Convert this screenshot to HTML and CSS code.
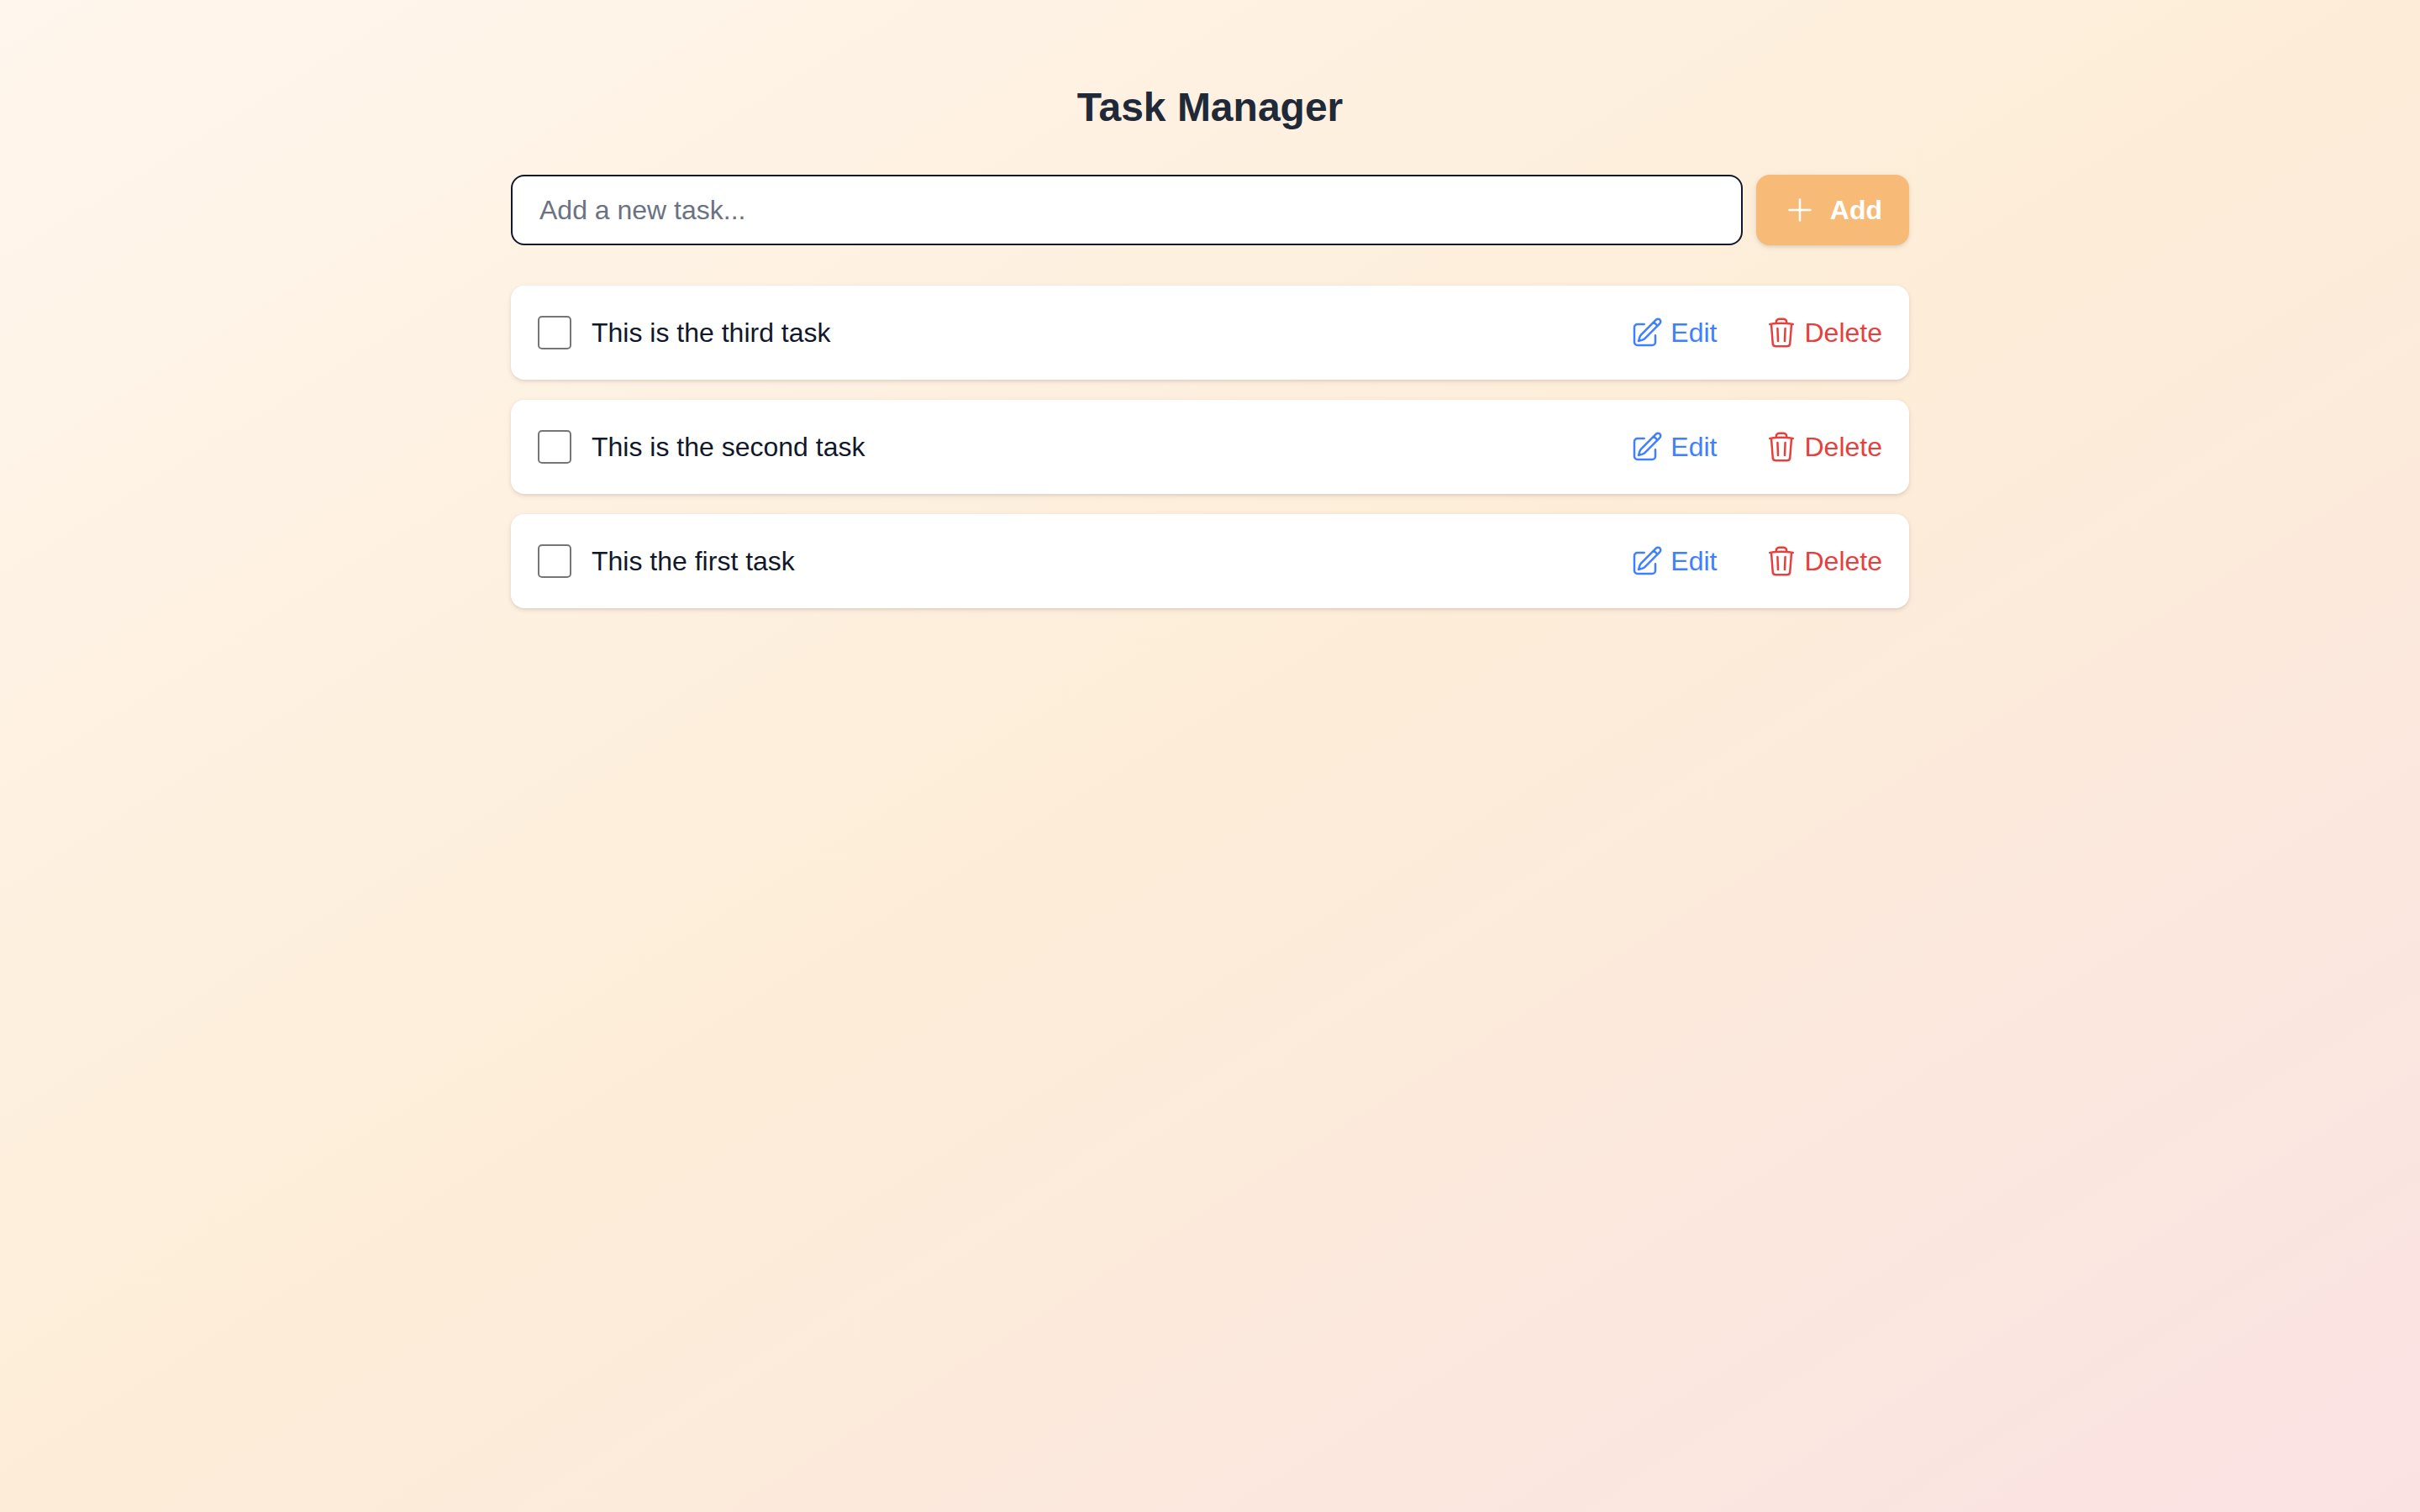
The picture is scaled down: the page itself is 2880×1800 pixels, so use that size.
FILE: index.html
```html
<!DOCTYPE html>
<html lang="en">
<head>
<meta charset="utf-8">
<meta name="viewport" content="width=device-width, initial-scale=1">
<title>Task Manager</title>
<link rel="stylesheet" href="styles.css">
</head>
<body>
<svg class="sprite" aria-hidden="true">
  <symbol id="plus" viewBox="0 0 24 24"><path d="M12 4.5v15m7.5-7.5h-15"/></symbol>
  <symbol id="edit" viewBox="0 0 24 24"><path d="m16.862 4.487 1.687-1.688a1.875 1.875 0 1 1 2.652 2.652L10.582 16.07a4.5 4.5 0 0 1-1.897 1.13L6 18l.8-2.685a4.5 4.5 0 0 1 1.13-1.897l8.932-8.931Zm0 0L19.5 7.125M18 14v4.75A2.25 2.25 0 0 1 15.75 21H5.25A2.25 2.25 0 0 1 3 18.75V8.25A2.25 2.25 0 0 1 5.25 6H10"/></symbol>
  <symbol id="trash" viewBox="0 0 24 24"><path d="m14.74 9-.346 9m-4.788 0L9.26 9m9.968-3.21c.342.052.682.107 1.022.166m-1.022-.165L18.16 19.673a2.25 2.25 0 0 1-2.244 2.077H8.084a2.25 2.25 0 0 1-2.244-2.077L4.772 5.79m14.456 0a48.108 48.108 0 0 0-3.478-.397m-12 .562c.34-.059.68-.114 1.022-.165m0 0a48.11 48.11 0 0 1 3.478-.397m7.5 0v-.916c0-1.18-.91-2.164-2.09-2.201a51.964 51.964 0 0 0-3.32 0c-1.18.037-2.09 1.022-2.09 2.201v.916m7.5 0a48.667 48.667 0 0 0-7.5 0"/></symbol>
</svg>
<main class="page">
  <h1 class="title">Task Manager</h1>
  <form class="add-form">
    <input class="add-input" type="text" placeholder="Add a new task..." aria-label="New task">
    <button class="add-button" type="submit"><svg class="icon" aria-hidden="true"><use href="#plus"/></svg>Add</button>
  </form>
  <ul class="tasks">
    <li class="task">
      <input class="task-check" type="checkbox" id="task-3">
      <label class="task-name" for="task-3">This is the third task</label>
      <div class="actions">
        <button class="action action-edit" type="button"><svg class="icon" aria-hidden="true"><use href="#edit"/></svg>Edit</button>
        <button class="action action-delete" type="button"><svg class="icon" aria-hidden="true"><use href="#trash"/></svg>Delete</button>
      </div>
    </li>
    <li class="task">
      <input class="task-check" type="checkbox" id="task-2">
      <label class="task-name" for="task-2">This is the second task</label>
      <div class="actions">
        <button class="action action-edit" type="button"><svg class="icon" aria-hidden="true"><use href="#edit"/></svg>Edit</button>
        <button class="action action-delete" type="button"><svg class="icon" aria-hidden="true"><use href="#trash"/></svg>Delete</button>
      </div>
    </li>
    <li class="task">
      <input class="task-check" type="checkbox" id="task-1">
      <label class="task-name" for="task-1">This the first task</label>
      <div class="actions">
        <button class="action action-edit" type="button"><svg class="icon" aria-hidden="true"><use href="#edit"/></svg>Edit</button>
        <button class="action action-delete" type="button"><svg class="icon" aria-hidden="true"><use href="#trash"/></svg>Delete</button>
      </div>
    </li>
  </ul>
</main>
</body>
</html>
```
FILE: styles.css
```css
*, *::before, *::after { box-sizing: border-box; }

body {
  margin: 0;
  min-height: 100vh;
  background: linear-gradient(to bottom right, #fff6ed, #fdedd8, #fae2e3);
  color: #11182b;
  font-family: "Liberation Sans", Arial, sans-serif;
  font-size: 32px;
  line-height: 48px;
}

button, input { font: inherit; }
button { cursor: pointer; }

.sprite { display: none; }

.icon {
  flex: none;
  width: 40px;
  height: 40px;
  fill: none;
  stroke: currentColor;
  stroke-width: 1.5;
  stroke-linecap: round;
  stroke-linejoin: round;
}

.page {
  max-width: 1792px;
  margin: 0 auto;
  padding: 96px 64px;
}

.title {
  margin: 0 0 48px;
  color: #1f2938;
  font-size: 48px;
  font-weight: 700;
  line-height: 64px;
  text-align: center;
}

.add-form {
  display: flex;
  gap: 16px;
  margin-bottom: 48px;
}

.add-input {
  flex: 1;
  min-width: 0;
  padding: 16px 32px;
  border: 2px solid #11182b;
  border-radius: 16px;
  background: #fff;
  color: inherit;
}

.add-input::placeholder { color: #6b7283; opacity: 1; }

.add-button {
  display: flex;
  align-items: center;
  gap: 16px;
  padding: 16px 32px;
  border: 0;
  border-radius: 16px;
  background: #f7bb77;
  box-shadow: 0 2px 6px rgba(0, 0, 0, 0.1), 0 2px 4px -2px rgba(0, 0, 0, 0.1);
  color: #fff;
  font-weight: 700;
}

.tasks {
  display: flex;
  flex-direction: column;
  gap: 24px;
  margin: 0;
  padding: 0;
  list-style: none;
}

.task {
  display: flex;
  align-items: center;
  gap: 24px;
  padding: 32px;
  border-radius: 16px;
  background: #fff;
  box-shadow: 0 2px 6px rgba(0, 0, 0, 0.1), 0 2px 4px -2px rgba(0, 0, 0, 0.1);
}

.task-check {
  flex: none;
  width: 40px;
  height: 40px;
  margin: 0;
  border: 2px solid #767676;
  border-radius: 5px;
  background: #fff;
  appearance: none;
}

.task-check:checked { background: #767676; }

.task-name { flex: 1; }

.actions { display: flex; gap: 56px; }

.action {
  display: flex;
  align-items: center;
  gap: 8px;
  padding: 0;
  border: 0;
  background: none;
}

.action-edit { color: #407fff; }
.action-delete { color: #e7403c; }
```
